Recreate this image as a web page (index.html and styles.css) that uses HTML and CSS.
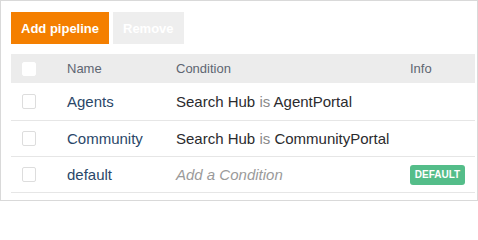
FILE: index.html
```html
<!DOCTYPE html>
<html>
<head>
<meta charset="utf-8">
<link rel="stylesheet" href="styles.css">
</head>
<body>
<div class="panel">
  <div class="toolbar">
    <button class="btn btn-primary">Add pipeline</button>
    <button class="btn btn-disabled">Remove</button>
  </div>
  <div class="table">
    <div class="row head">
      <div class="cell"><span class="check check-head"></span></div>
      <div class="cell">Name</div>
      <div class="cell">Condition</div>
      <div class="cell">Info</div>
    </div>
    <div class="row body first">
      <div class="cell"><span class="check"></span></div>
      <div class="cell name">Agents</div>
      <div class="cell cond">Search Hub <span class="op">is</span> AgentPortal</div>
      <div class="cell"></div>
    </div>
    <div class="row body">
      <div class="cell"><span class="check"></span></div>
      <div class="cell name">Community</div>
      <div class="cell cond">Search Hub <span class="op">is</span> CommunityPortal</div>
      <div class="cell"></div>
    </div>
    <div class="row body">
      <div class="cell"><span class="check"></span></div>
      <div class="cell name">default</div>
      <div class="cell cond placeholder">Add a Condition</div>
      <div class="cell"><span class="badge">DEFAULT</span></div>
    </div>
  </div>
</div>
</body>
</html>
```

FILE: styles.css
```css
html, body {
  margin: 0;
  padding: 0;
  background: #ffffff;
}

.panel {
  box-sizing: border-box;
  width: 478px;
  height: 201px;
  border: 1px solid #d9d9d9;
  padding: 11px 2px 0 10px;
  font-family: "Liberation Sans", Arial, sans-serif;
}

.toolbar {
  display: flex;
  gap: 4px;
  margin-bottom: 10px;
}

.btn {
  height: 32px;
  padding: 0 10px;
  border: none;
  font-family: "Liberation Sans", Arial, sans-serif;
  font-size: 13px;
  font-weight: bold;
  color: #ffffff;
  cursor: pointer;
}

.btn-primary {
  background: #f47f00;
}

.btn-disabled {
  background: #eeeeee;
}

.row {
  display: grid;
  grid-template-columns: 45px 109px 234px 1fr;
  align-items: center;
}

.cell {
  padding-left: 11px;
  display: flex;
  align-items: center;
}

.head {
  height: 29px;
  background: #ececec;
  font-size: 13px;
  color: #5e6672;
}

.body {
  height: 35px;
  border-bottom: 1px solid #e6e6e6;
  font-size: 15px;
}

.body.first {
  height: 37px;
}

.check {
  box-sizing: border-box;
  display: block;
  width: 14px;
  height: 15px;
  border: 1px solid #dddddd;
  border-radius: 2px;
  background: #ffffff;
}

.check-head {
  height: 14px;
  border-color: #ffffff;
}

.name {
  color: #2a4769;
}

.cond {
  color: #2b2b2e;
  white-space: pre;
}

.op {
  color: #8a8a8a;
}

.placeholder {
  color: #9a9a9a;
  font-style: italic;
}

.badge {
  display: inline-flex;
  align-items: center;
  justify-content: center;
  width: 55px;
  height: 20px;
  border-radius: 3px;
  background: #54bd89;
  color: #ffffff;
  font-size: 10px;
  font-weight: bold;
}
```
